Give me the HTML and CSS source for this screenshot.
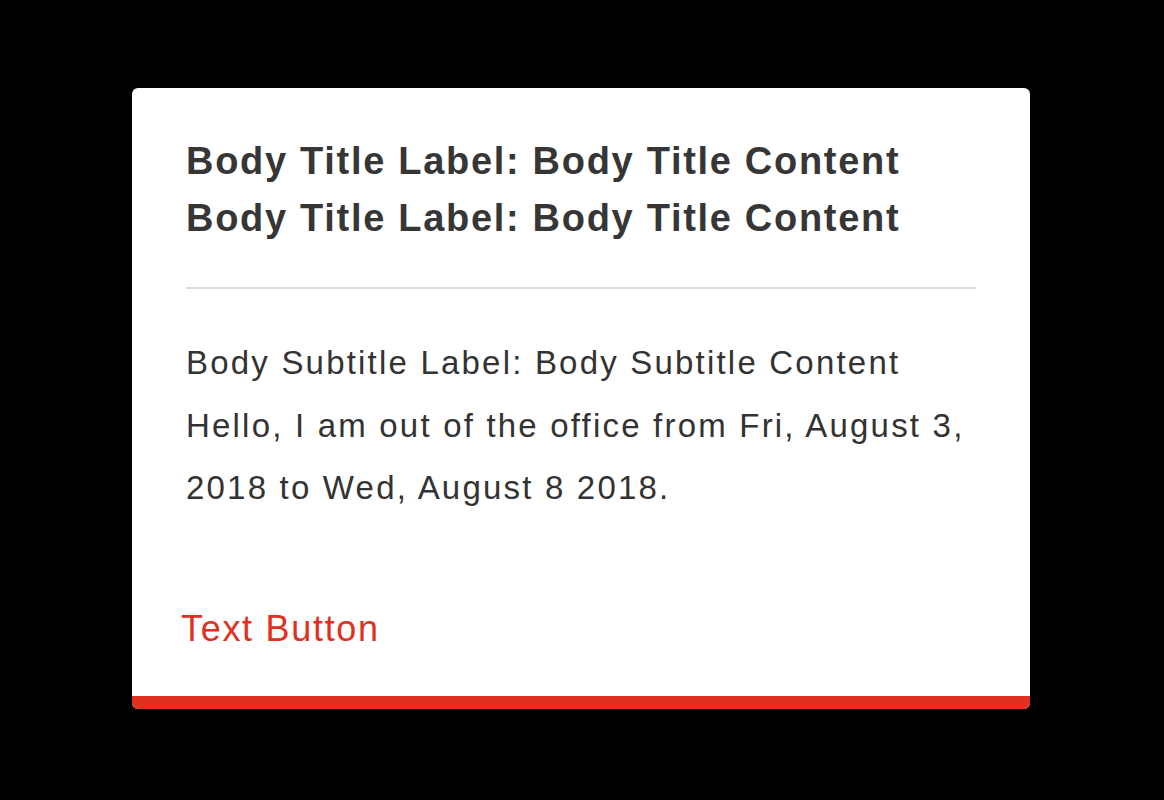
FILE: index.html
```html
<!DOCTYPE html>
<html lang="en">
<head>
<meta charset="utf-8">
<title>Card</title>
<link rel="stylesheet" href="styles.css">
</head>
<body>
<div class="stage">
  <div class="card">
    <div class="card-body">
      <div class="title">
        <div class="title-line">Body Title Label: Body Title Content</div>
        <div class="title-line">Body Title Label: Body Title Content</div>
      </div>
      <hr class="divider">
      <div class="subtitle">
        <p class="text">Body Subtitle Label: Body Subtitle Content</p>
        <p class="text">Hello, I am out of the office from Fri, August 3, 2018 to Wed, August 8 2018.</p>
      </div>
      <div class="actions">
        <a class="text-button">Text Button</a>
      </div>
    </div>
    <div class="accent-bar"></div>
  </div>
</div>
</body>
</html>
```

FILE: styles.css
```css
html, body {
  margin: 0;
  padding: 0;
  background: #000;
}
.stage {
  width: 1164px;
  height: 800px;
  box-sizing: border-box;
  padding: 88px 0 0 132px;
}
.card {
  width: 898px;
  height: 621px;
  background: #fff;
  border-radius: 6px;
  overflow: hidden;
  display: flex;
  flex-direction: column;
}
.card-body {
  flex: 1;
  padding: 45px 54px 0 54px;
  display: flex;
  flex-direction: column;
  font-family: "Liberation Sans", Arial, sans-serif;
  color: #333;
}
.title {
  font-size: 38px;
  font-weight: 700;
  line-height: 57px;
  letter-spacing: 1.7px;
  color: #363636;
}
.divider {
  border: 0;
  height: 2px;
  background: #d9d9d9;
  margin: 40px 0 0 0;
}
.subtitle {
  margin-top: 43px;
}
.text {
  margin: 0;
  font-size: 33px;
  line-height: 62.5px;
  letter-spacing: 2.2px;
}
.actions {
  margin-top: 87px;
  margin-left: -5px;
}
.text-button {
  font-size: 36px;
  color: #e03020;
  line-height: 44px;
  letter-spacing: 1.7px;
}
.accent-bar {
  height: 13px;
  background: #e0301e;
}
```
